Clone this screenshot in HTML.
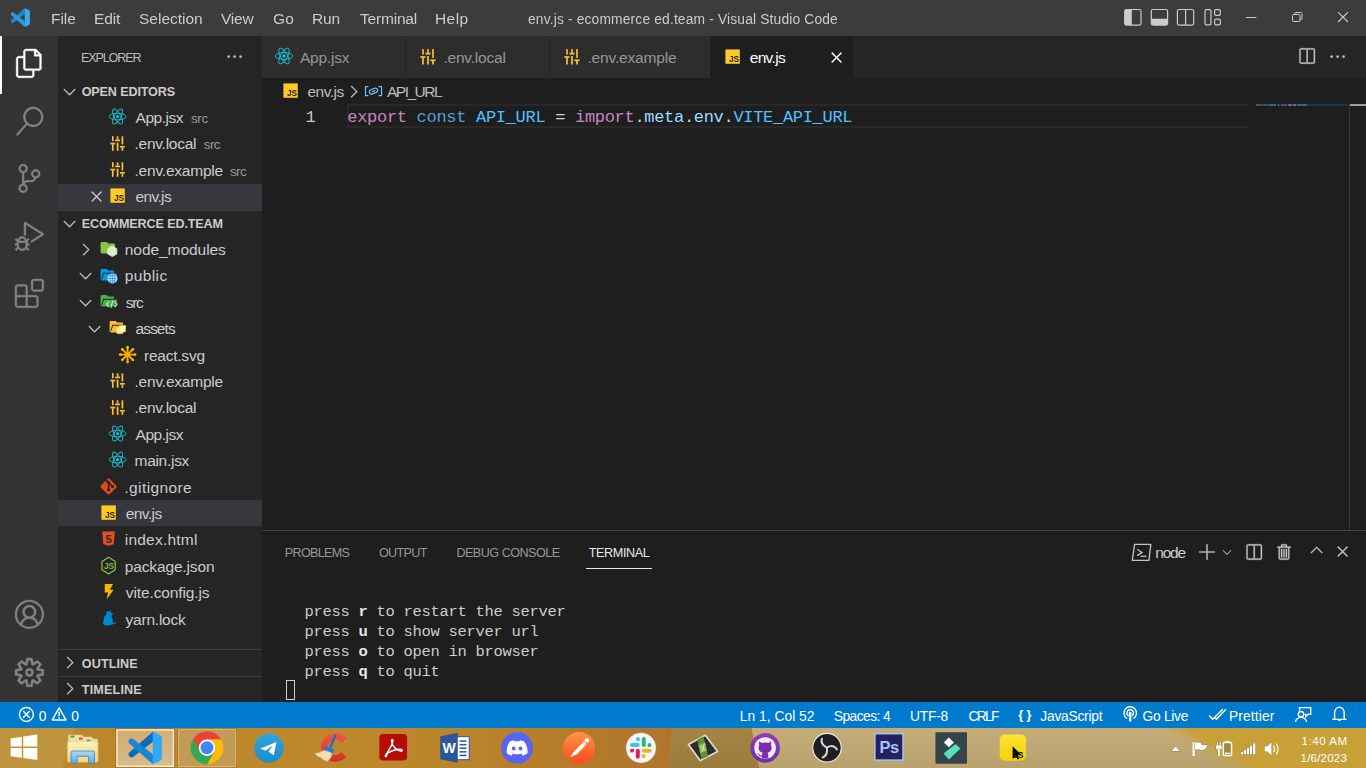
<!DOCTYPE html>
<html lang="en"><head><meta charset="utf-8"><title>env.js - ecommerce ed.team - Visual Studio Code</title>
<style>
html,body{margin:0;padding:0}
body{width:1366px;height:768px;overflow:hidden;position:relative;background:#1e1e1e;font-family:'Liberation Sans', sans-serif;}
.a{position:absolute}
.t{position:absolute;white-space:pre;line-height:20px;}
svg{position:absolute;overflow:visible}
.m{position:absolute;white-space:pre;font-family:'Liberation Mono', monospace;}

</style></head><body>
<div class="a" style="left:0px;top:0px;width:1366px;height:36px;background:#3c3c3c;"></div>
<div class="a" style="left:0px;top:36px;width:58px;height:666px;background:#333333;"></div>
<div class="a" style="left:0px;top:36px;width:2px;height:58px;background:#ffffff;"></div>
<div class="a" style="left:58px;top:36px;width:204px;height:666px;background:#252526;"></div>
<div class="a" style="left:58px;top:183.5px;width:204px;height:26.4px;background:#37373d;"></div>
<div class="a" style="left:58px;top:500px;width:204px;height:26.4px;background:#37373d;"></div>
<div class="a" style="left:58px;top:210px;width:204px;height:1px;background:#3c3c3d;"></div>
<div class="a" style="left:58px;top:649px;width:204px;height:1px;background:#3c3c3d;"></div>
<div class="a" style="left:58px;top:676px;width:204px;height:1px;background:#3c3c3d;"></div>
<div class="a" style="left:262px;top:36px;width:1104px;height:42px;background:#252526;"></div>
<div class="a" style="left:262px;top:36px;width:143px;height:42px;background:#2d2d2d;"></div>
<div class="a" style="left:406px;top:36px;width:143px;height:42px;background:#2d2d2d;"></div>
<div class="a" style="left:550px;top:36px;width:160px;height:42px;background:#2d2d2d;"></div>
<div class="a" style="left:711px;top:36px;width:142px;height:42px;background:#1e1e1e;"></div>
<div class="a" style="left:347px;top:104px;width:901px;height:24px;background:transparent;box-sizing:border-box;border:2px solid #282828;border-right:none;"></div>
<div class="a" style="left:1256px;top:104px;width:92px;height:2px;background:#21354a;"></div>
<div class="a" style="left:1349px;top:104px;width:1px;height:426px;background:#3a3a3a;"></div>
<div class="a" style="left:1256px;top:104px;width:6px;height:2px;background:#7d5a80;opacity:0.6"></div>
<div class="a" style="left:1263px;top:104px;width:5px;height:2px;background:#466a8c;opacity:0.6"></div>
<div class="a" style="left:1269px;top:104px;width:7px;height:2px;background:#3f86ad;opacity:0.6"></div>
<div class="a" style="left:1278px;top:104px;width:1px;height:2px;background:#888888;opacity:0.6"></div>
<div class="a" style="left:1281px;top:104px;width:6px;height:2px;background:#7d5a80;opacity:0.6"></div>
<div class="a" style="left:1288px;top:104px;width:4px;height:2px;background:#6f97b0;opacity:0.6"></div>
<div class="a" style="left:1293px;top:104px;width:3px;height:2px;background:#6f97b0;opacity:0.6"></div>
<div class="a" style="left:1297px;top:104px;width:10px;height:2px;background:#3f86ad;opacity:0.6"></div>
<div class="a" style="left:1350px;top:104px;width:16px;height:2px;background:#a0a0a0;"></div>
<div class="a" style="left:262px;top:530px;width:1104px;height:1px;background:#424242;"></div>
<div class="a" style="left:586px;top:568px;width:66px;height:1px;background:#e7e7e7;"></div>
<div class="a" style="left:286px;top:680px;width:9px;height:19.5px;background:transparent;box-sizing:border-box;border:1px solid #cccccc;"></div>
<div class="a" style="left:0px;top:701.6px;width:1366px;height:26.4px;background:#007acc;"></div>
<svg style="left:0px;top:728px" width="1366" height="40" viewBox="0 728 1366 40" ><defs><linearGradient id="tbL" x1="0" x2="1" y1="0" y2="0"><stop offset="0" stop-color="#bc862c"/><stop offset="0.55" stop-color="#bd882c"/><stop offset="0.72" stop-color="#b8832b"/><stop offset="0.9" stop-color="#b3792b"/><stop offset="1" stop-color="#b0752b"/></linearGradient><linearGradient id="tbT" x1="0" x2="0" y1="0" y2="1"><stop offset="0" stop-color="#c5ad7a"/><stop offset="1" stop-color="#baa26e"/></linearGradient><linearGradient id="tbO" x1="0" x2="0" y1="0" y2="1"><stop offset="0" stop-color="#a58442"/><stop offset="1" stop-color="#9b7c3c"/></linearGradient><linearGradient id="tbG" gradientUnits="userSpaceOnUse" x1="1204" y1="755" x2="1212" y2="741"><stop offset="0" stop-color="#c7a138" stop-opacity="0"/><stop offset="1" stop-color="#c7a138" stop-opacity="1"/></linearGradient></defs><rect x="0" y="728" width="1366" height="40" fill="url(#tbT)"/><rect x="0" y="728" width="672" height="40" fill="url(#tbL)"/><polygon points="0,728 74.500,728 62.500,768 0,768" fill="#bf943e"/><polygon points="671.700,728 751.500,728 759.300,768 668,768" fill="url(#tbO)"/><rect x="1120" y="728" width="246" height="40" fill="url(#tbG)"/><defs><linearGradient id="abtn" x1="0" x2="0.3" y1="0" y2="1"><stop offset="0" stop-color="#d1ab6f"/><stop offset="1" stop-color="#d7ba8f"/></linearGradient></defs><rect x="115.500" y="728.500" width="59.200" height="39" fill="#8f6418"/><rect x="116.900" y="729.900" width="56.500" height="36.400" fill="url(#abtn)" stroke="#fbedca" stroke-width="1.500"/><rect x="177.500" y="728.500" width="59.200" height="39" fill="#a9771f"/><rect x="178.600" y="729.600" width="57" height="37" fill="#c39b58" stroke="#dcb873" stroke-width="1"/></svg>
<svg style="left:14.6px;top:48.9px" width="28.8" height="28.8" viewBox="0 0 24 24" ><path d="M17.5 0h-9L7 1.5V6H2.5L1 7.5v15.07L2.5 24h12.07L16 22.57V18h4.7l1.3-1.43V4.5L17.5 0zm0 2.12l2.38 2.38H17.5V2.12zm-3 20.38h-12v-15H7v9.07L8.5 18h6v4.5zm6-6h-12v-15H16V6h4.5v10.5z" fill="#ffffff" stroke="#ffffff" stroke-width="0.35"/></svg>
<svg style="left:14.6px;top:106.5px" width="28.8" height="28.8" viewBox="0 0 24 24" ><path d="M15.25 0a8.25 8.25 0 0 0-6.18 13.72L1 22.88l1.12 1 8.05-9.12A8.251 8.251 0 1 0 15.25.01V0zm0 15a6.75 6.75 0 1 1 0-13.5 6.75 6.75 0 0 1 0 13.5z" fill="#858585" stroke="#858585" stroke-width="0.35"/></svg>
<svg style="left:14.6px;top:164.1px" width="28.8" height="28.8" viewBox="0 0 24 24" ><path d="M21.007 8.222A3.738 3.738 0 0 0 15.045 5.2a3.737 3.737 0 0 0 1.156 6.583 2.988 2.988 0 0 1-2.668 1.67h-2.99a4.456 4.456 0 0 0-2.989 1.165V7.4a3.737 3.737 0 1 0-1.494 0v9.117a3.776 3.776 0 1 0 1.816.099 2.99 2.99 0 0 1 2.668-1.667h2.99a4.484 4.484 0 0 0 4.223-3.039 3.736 3.736 0 0 0 3.25-3.687zM4.565 3.738a2.242 2.242 0 1 1 4.484 0 2.242 2.242 0 0 1-4.484 0zm4.484 16.441a2.242 2.242 0 1 1-4.484 0 2.242 2.242 0 0 1 4.484 0zm8.221-9.715a2.242 2.242 0 1 1 0-4.485 2.242 2.242 0 0 1 0 4.485z" fill="#858585" stroke="#858585" stroke-width="0.35"/></svg>
<svg style="left:14.6px;top:221.70000000000002px" width="28.8" height="28.8" viewBox="0 0 24 24" ><path d="M10.94 13.5l-1.32 1.32a3.73 3.73 0 0 0-7.24 0L1.06 13.5 0 14.56l1.72 1.72-.22.22V18H0v1.5h1.5v.08c.077.489.214.966.41 1.42L0 22.94 1.06 24l1.65-1.65A4.308 4.308 0 0 0 6 24a4.31 4.31 0 0 0 3.29-1.65L10.94 24 12 22.94 10.09 21c.198-.464.336-.951.41-1.45v-.1H12V18h-1.5v-1.5l-.22-.22L12 14.56l-1.06-1.06zM6 13.5a2.25 2.25 0 0 1 2.25 2.25h-4.5A2.25 2.25 0 0 1 6 13.5zm3 6a3.33 3.33 0 0 1-3 3 3.33 3.33 0 0 1-3-3v-2.25h6v2.25zm14.76-9.9v1.26L13.5 17.37V15.6l8.5-5.37L9 2v9.46a5.07 5.07 0 0 0-1.5-.72V.63L8.64 0l15.12 9.6z" fill="#858585" stroke="#858585" stroke-width="0.35"/></svg>
<svg style="left:14.6px;top:279.3px" width="28.8" height="28.8" viewBox="0 0 24 24" ><path d="M13.5 1.5L15 0h7.5L24 1.5V9l-1.5 1.5H15L13.5 9V1.5zm1.5 0V9h7.5V1.5H15zM0 15V6l1.5-1.5H9L10.5 6v7.5H18l1.5 1.5v7.5L18 24H1.5L0 22.5V15zm9-1.5V6H1.5v7.5H9zM9 15H1.5v7.5H9V15zm1.5 7.5H18V15h-7.5v7.5z" fill="#858585" stroke="#858585" stroke-width="0.35"/></svg>
<svg style="left:14.6px;top:599.8px" width="28.8" height="28.8" viewBox="0 0 16 16" ><path d="M16 7.992C16 3.58 12.416 0 8 0S0 3.58 0 7.992c0 2.43 1.104 4.62 2.832 6.09.016.016.032.016.032.032.144.112.288.224.448.336.08.048.144.111.224.175A7.98 7.98 0 0 0 8.016 16a7.98 7.98 0 0 0 4.48-1.375c.08-.048.144-.111.224-.16.144-.111.304-.223.448-.335.016-.016.032-.016.032-.032 1.696-1.487 2.8-3.676 2.8-6.106zm-8 7.001c-1.504 0-2.88-.48-4.016-1.279.016-.128.048-.255.08-.383a4.17 4.17 0 0 1 .416-.991c.176-.304.384-.576.64-.816.24-.24.528-.463.816-.639.304-.176.624-.304.976-.4A4.15 4.15 0 0 1 8 10.342a4.185 4.185 0 0 1 2.928 1.166c.368.368.656.8.864 1.295.112.288.192.592.24.911A7.03 7.03 0 0 1 8 14.993zm-2.448-7.4a2.49 2.49 0 0 1-.208-1.024c0-.351.064-.703.208-1.023.144-.32.336-.607.576-.847.24-.24.528-.431.848-.575.32-.144.672-.208 1.024-.208.368 0 .704.064 1.024.208.32.144.608.336.848.575.24.24.432.528.576.847.144.32.208.672.208 1.023 0 .368-.064.704-.208 1.023a2.84 2.84 0 0 1-.576.848 2.84 2.84 0 0 1-.848.575 2.715 2.715 0 0 1-2.064 0 2.84 2.84 0 0 1-.848-.575 2.526 2.526 0 0 1-.56-.848zm7.424 5.306c0-.032-.016-.048-.016-.08a5.22 5.22 0 0 0-.688-1.406 4.883 4.883 0 0 0-1.088-1.135 5.207 5.207 0 0 0-1.04-.608 2.82 2.82 0 0 0 .464-.383 4.2 4.2 0 0 0 .624-.784 3.624 3.624 0 0 0 .528-1.934 3.71 3.71 0 0 0-.288-1.47 3.799 3.799 0 0 0-.816-1.199 3.845 3.845 0 0 0-1.2-.8 3.72 3.72 0 0 0-1.472-.287 3.72 3.72 0 0 0-1.472.288 3.631 3.631 0 0 0-1.2.815 3.84 3.84 0 0 0-.8 1.199 3.71 3.71 0 0 0-.288 1.47c0 .352.048.688.144 1.007.096.336.224.64.4.927.16.288.384.544.624.784.144.144.304.271.48.383a5.12 5.12 0 0 0-1.04.624c-.416.32-.784.703-1.088 1.119a4.999 4.999 0 0 0-.688 1.406c-.016.032-.016.064-.016.08C1.776 11.636.992 9.91.992 7.992.992 4.14 4.144.991 8 .991s7.008 3.149 7.008 7.001a6.96 6.96 0 0 1-2.032 4.907z" fill="#858585" stroke="#858585" stroke-width="0.25"/></svg>
<svg style="left:14.6px;top:658px" width="28.8" height="28.8" viewBox="0 0 24 24" ><path d="M19.85 8.75l4.15.83v4.84l-4.15.83 2.35 3.52-3.43 3.43-3.52-2.35-.83 4.15H9.58l-.83-4.15-3.52 2.35-3.43-3.43 2.35-3.52L0 14.42V9.58l4.15-.83L1.8 5.23 5.23 1.8l3.52 2.35L9.58 0h4.84l.83 4.15 3.52-2.35 3.43 3.43-2.35 3.52zm-1.57 5.07l4-.81v-2l-4-.81-.54-1.3 2.29-3.43-1.43-1.43-3.43 2.29-1.3-.54-.81-4h-2l-.81 4-1.3.54-3.43-2.29-1.43 1.43L6.38 8.9l-.54 1.3-4 .81v2l4 .81.54 1.3-2.29 3.43 1.43 1.43 3.43-2.29 1.3.54.81 4h2l.81-4 1.3-.54 3.43 2.29 1.43-1.43-2.29-3.43.54-1.3zm-8.186-4.672A3.43 3.43 0 0 1 12 8.57 3.44 3.44 0 0 1 15.43 12a3.43 3.43 0 1 1-5.336-2.852zm.956 4.274c.281.188.612.288.95.288A1.7 1.7 0 0 0 13.71 12a1.71 1.71 0 1 0-2.66 1.422z" fill="#858585" stroke="#858585" stroke-width="0.35"/></svg>
<svg style="left:59.9px;top:81.6px" width="19.2" height="19.2" viewBox="0 0 16 16" ><path d="M7.976 10.072l4.357-4.357.62.618L8.284 11h-.618L3 6.333l.619-.618 4.357 4.357z" fill="#c5c5c5" stroke="#c5c5c5" stroke-width="0.25"/></svg>
<svg style="left:59.9px;top:213.6px" width="19.2" height="19.2" viewBox="0 0 16 16" ><path d="M7.976 10.072l4.357-4.357.62.618L8.284 11h-.618L3 6.333l.619-.618 4.357 4.357z" fill="#c5c5c5" stroke="#c5c5c5" stroke-width="0.25"/></svg>
<svg style="left:59.9px;top:653px" width="19.2" height="19.2" viewBox="0 0 16 16" ><path d="M10.072 8.024L5.715 3.667l.618-.62L11 7.716v.618L6.333 13l-.618-.619 4.357-4.357z" fill="#c5c5c5" stroke="#c5c5c5" stroke-width="0.25"/></svg>
<svg style="left:59.9px;top:679.2px" width="19.2" height="19.2" viewBox="0 0 16 16" ><path d="M10.072 8.024L5.715 3.667l.618-.62L11 7.716v.618L6.333 13l-.618-.619 4.357-4.357z" fill="#c5c5c5" stroke="#c5c5c5" stroke-width="0.25"/></svg>
<svg style="left:224.6px;top:46.8px" width="19.2" height="19.2" viewBox="0 0 16 16" ><path d="M4 8a1 1 0 1 1-2 0 1 1 0 0 1 2 0zm5 0a1 1 0 1 1-2 0 1 1 0 0 1 2 0zm5 0a1 1 0 1 1-2 0 1 1 0 0 1 2 0z" fill="#c5c5c5" stroke="#c5c5c5" stroke-width="0.25"/></svg>
<svg style="left:76.2px;top:240px" width="19.2" height="19.2" viewBox="0 0 16 16" ><path d="M10.072 8.024L5.715 3.667l.618-.62L11 7.716v.618L6.333 13l-.618-.619 4.357-4.357z" fill="#c5c5c5" stroke="#c5c5c5" stroke-width="0.25"/></svg>
<svg style="left:76.3px;top:266.4px" width="19.2" height="19.2" viewBox="0 0 16 16" ><path d="M7.976 10.072l4.357-4.357.62.618L8.284 11h-.618L3 6.333l.619-.618 4.357 4.357z" fill="#c5c5c5" stroke="#c5c5c5" stroke-width="0.25"/></svg>
<svg style="left:76.3px;top:292.8px" width="19.2" height="19.2" viewBox="0 0 16 16" ><path d="M7.976 10.072l4.357-4.357.62.618L8.284 11h-.618L3 6.333l.619-.618 4.357 4.357z" fill="#c5c5c5" stroke="#c5c5c5" stroke-width="0.25"/></svg>
<svg style="left:85.4px;top:319.2px" width="19.2" height="19.2" viewBox="0 0 16 16" ><path d="M7.976 10.072l4.357-4.357.62.618L8.284 11h-.618L3 6.333l.619-.618 4.357 4.357z" fill="#c5c5c5" stroke="#c5c5c5" stroke-width="0.25"/></svg>
<svg style="left:86.6px;top:187.1px" width="19.2" height="19.2" viewBox="0 0 16 16" ><path d="M8 8.707l3.646 3.647.708-.707L8.707 8l3.647-3.646-.707-.708L8 7.293 4.354 3.646l-.707.708L7.293 8l-3.646 3.646.707.708L8 8.707z" fill="#c5c5c5" stroke="#c5c5c5" stroke-width="0.25"/></svg>
<svg style="left:827.3px;top:47.5px" width="19.2" height="19.2" viewBox="0 0 16 16" ><path d="M8 8.707l3.646 3.647.708-.707L8.707 8l3.647-3.646-.707-.708L8 7.293 4.354 3.646l-.707.708L7.293 8l-3.646 3.646.707.708L8 8.707z" fill="#ffffff" stroke="#ffffff" stroke-width="0.25"/></svg>
<svg style="left:1297.3px;top:47px" width="19.2" height="19.2" viewBox="0 0 16 16" ><path d="M14 1H3L2 2v11l1 1h11l1-1V2l-1-1zM8 13H3V2h5v11zm6 0H9V2h5v11z" fill="#c5c5c5" stroke="#c5c5c5" stroke-width="0.25"/></svg>
<svg style="left:1328.3px;top:46.9px" width="19.2" height="19.2" viewBox="0 0 16 16" ><path d="M4 8a1 1 0 1 1-2 0 1 1 0 0 1 2 0zm5 0a1 1 0 1 1-2 0 1 1 0 0 1 2 0zm5 0a1 1 0 1 1-2 0 1 1 0 0 1 2 0z" fill="#c5c5c5" stroke="#c5c5c5" stroke-width="0.25"/></svg>
<svg style="left:1197.5px;top:542.6px" width="19.2" height="19.2" viewBox="0 0 16 16" ><path d="M14 7v1H8v6H7V8H1V7h6V1h1v6h6z" fill="#c5c5c5" stroke="#c5c5c5" stroke-width="0.25"/></svg>
<svg style="left:1219.5px;top:545.3px" width="14" height="14" viewBox="0 0 16 16" ><path d="M7.976 10.072l4.357-4.357.62.618L8.284 11h-.618L3 6.333l.619-.618 4.357 4.357z" fill="#c5c5c5" /></svg>
<svg style="left:1244.2px;top:542.6px" width="19.2" height="19.2" viewBox="0 0 16 16" ><path d="M14 1H3L2 2v11l1 1h11l1-1V2l-1-1zM8 13H3V2h5v11zm6 0H9V2h5v11z" fill="#c5c5c5" stroke="#c5c5c5" stroke-width="0.25"/></svg>
<svg style="left:1275.3px;top:542.6px" width="19.2" height="19.2" viewBox="0 0 16 16" ><path d="M10 3h3v1h-1v9l-1 1H4l-1-1V4H2V3h3V2a1 1 0 0 1 1-1h3a1 1 0 0 1 1 1v1zM9 2H6v1h3V2zM4 13h7V4H4v9zm2-8H5v7h1V5zm1 0h1v7H7V5zm2 0h1v7H9V5z" fill="#c5c5c5" stroke="#c5c5c5" stroke-width="0.25"/></svg>
<svg style="left:1306.8px;top:541.3px" width="19.2" height="19.2" viewBox="0 0 16 16" ><path d="M8.024 5.928l-4.357 4.357-.62-.618L7.716 5h.618L13 9.667l-.619.618-4.357-4.357z" fill="#c5c5c5" stroke="#c5c5c5" stroke-width="0.25"/></svg>
<svg style="left:1333.4px;top:542.4px" width="19.2" height="19.2" viewBox="0 0 16 16" ><path d="M8 8.707l3.646 3.647.708-.707L8.707 8l3.647-3.646-.707-.708L8 7.293 4.354 3.646l-.707.708L7.293 8l-3.646 3.646.707.708L8 8.707z" fill="#c5c5c5" stroke="#c5c5c5" stroke-width="0.25"/></svg>
<svg style="left:344px;top:82px" width="19.2" height="19.2" viewBox="0 0 16 16" ><path d="M10.072 8.024L5.715 3.667l.618-.62L11 7.716v.618L6.333 13l-.618-.619 4.357-4.357z" fill="#c5c5c5" stroke="#c5c5c5" stroke-width="0.25"/></svg>
<svg style="left:1126px;top:538px" width="70" height="28" viewBox="1126 538 70 28" ><path d="M1134.6 544.4 H1150.8 L1148.9 560.4 H1132.3 Z" fill="none" stroke="#c5c5c5" stroke-width="1.3" stroke-linejoin="round"/><path d="M1137.2 549.2 L1142 552.4 L1137.2 555.6" fill="none" stroke="#c5c5c5" stroke-width="1.3" /><path d="M1140.6 556.3 H1146.4" fill="none" stroke="#c5c5c5" stroke-width="1.3" /></svg>
<svg style="left:107.9px;top:106.8px" width="19.2" height="19.2" viewBox="0 0 24 24" ><ellipse cx="12" cy="12" rx="10.6" ry="4.1" fill="none" stroke="#1fbdd2" stroke-width="1.15" transform="rotate(0 12 12)"/><ellipse cx="12" cy="12" rx="10.6" ry="4.1" fill="none" stroke="#1fbdd2" stroke-width="1.15" transform="rotate(60 12 12)"/><ellipse cx="12" cy="12" rx="10.6" ry="4.1" fill="none" stroke="#1fbdd2" stroke-width="1.15" transform="rotate(120 12 12)"/><circle cx="12" cy="12" r="2" fill="#1fbdd2"/></svg>
<svg style="left:107.8px;top:133.6px" width="19.2" height="19.2" viewBox="0 0 24 24" ><rect x="5" y="3" width="2" height="6" fill="#fbc235" stroke="#fbc235" stroke-width="0.1"/><rect x="3" y="11" width="6" height="2" fill="#fbc235" stroke="#fbc235" stroke-width="0.1"/><rect x="5" y="13" width="2" height="8" fill="#fbc235" stroke="#fbc235" stroke-width="0.1"/><rect x="11" y="3" width="2" height="4" fill="#fbc235" stroke="#fbc235" stroke-width="0.1"/><rect x="9" y="7" width="6" height="2" fill="#fbc235" stroke="#fbc235" stroke-width="0.1"/><rect x="11" y="11" width="2" height="10" fill="#fbc235" stroke="#fbc235" stroke-width="0.1"/><rect x="17" y="3" width="2" height="10" fill="#fbc235" stroke="#fbc235" stroke-width="0.1"/><rect x="15" y="15" width="6" height="2" fill="#fbc235" stroke="#fbc235" stroke-width="0.1"/><rect x="17" y="17" width="2" height="4" fill="#fbc235" stroke="#fbc235" stroke-width="0.1"/></svg>
<svg style="left:107.8px;top:160px" width="19.2" height="19.2" viewBox="0 0 24 24" ><rect x="5" y="3" width="2" height="6" fill="#fbc235" stroke="#fbc235" stroke-width="0.1"/><rect x="3" y="11" width="6" height="2" fill="#fbc235" stroke="#fbc235" stroke-width="0.1"/><rect x="5" y="13" width="2" height="8" fill="#fbc235" stroke="#fbc235" stroke-width="0.1"/><rect x="11" y="3" width="2" height="4" fill="#fbc235" stroke="#fbc235" stroke-width="0.1"/><rect x="9" y="7" width="6" height="2" fill="#fbc235" stroke="#fbc235" stroke-width="0.1"/><rect x="11" y="11" width="2" height="10" fill="#fbc235" stroke="#fbc235" stroke-width="0.1"/><rect x="17" y="3" width="2" height="10" fill="#fbc235" stroke="#fbc235" stroke-width="0.1"/><rect x="15" y="15" width="6" height="2" fill="#fbc235" stroke="#fbc235" stroke-width="0.1"/><rect x="17" y="17" width="2" height="4" fill="#fbc235" stroke="#fbc235" stroke-width="0.1"/></svg>
<svg style="left:107.9px;top:186px" width="19.2" height="19.2" viewBox="0 0 24 24" ><rect x="3" y="3" width="18" height="18" fill="#ffca28"/><text x="19.6" y="19.2" text-anchor="end" font-family="Liberation Sans, sans-serif" font-weight="700" font-size="10.2" fill="#2a2204" letter-spacing="-0.2">JS</text></svg>
<svg style="left:274px;top:46.4px" width="20" height="20" viewBox="0 0 24 24" ><ellipse cx="12" cy="12" rx="10.6" ry="4.1" fill="none" stroke="#1fbdd2" stroke-width="1.15" transform="rotate(0 12 12)"/><ellipse cx="12" cy="12" rx="10.6" ry="4.1" fill="none" stroke="#1fbdd2" stroke-width="1.15" transform="rotate(60 12 12)"/><ellipse cx="12" cy="12" rx="10.6" ry="4.1" fill="none" stroke="#1fbdd2" stroke-width="1.15" transform="rotate(120 12 12)"/><circle cx="12" cy="12" r="2" fill="#1fbdd2"/></svg>
<svg style="left:418px;top:46.6px" width="20" height="20" viewBox="0 0 24 24" ><rect x="5" y="3" width="2" height="6" fill="#fbc235" stroke="#fbc235" stroke-width="0.1"/><rect x="3" y="11" width="6" height="2" fill="#fbc235" stroke="#fbc235" stroke-width="0.1"/><rect x="5" y="13" width="2" height="8" fill="#fbc235" stroke="#fbc235" stroke-width="0.1"/><rect x="11" y="3" width="2" height="4" fill="#fbc235" stroke="#fbc235" stroke-width="0.1"/><rect x="9" y="7" width="6" height="2" fill="#fbc235" stroke="#fbc235" stroke-width="0.1"/><rect x="11" y="11" width="2" height="10" fill="#fbc235" stroke="#fbc235" stroke-width="0.1"/><rect x="17" y="3" width="2" height="10" fill="#fbc235" stroke="#fbc235" stroke-width="0.1"/><rect x="15" y="15" width="6" height="2" fill="#fbc235" stroke="#fbc235" stroke-width="0.1"/><rect x="17" y="17" width="2" height="4" fill="#fbc235" stroke="#fbc235" stroke-width="0.1"/></svg>
<svg style="left:562px;top:46.6px" width="20" height="20" viewBox="0 0 24 24" ><rect x="5" y="3" width="2" height="6" fill="#fbc235" stroke="#fbc235" stroke-width="0.1"/><rect x="3" y="11" width="6" height="2" fill="#fbc235" stroke="#fbc235" stroke-width="0.1"/><rect x="5" y="13" width="2" height="8" fill="#fbc235" stroke="#fbc235" stroke-width="0.1"/><rect x="11" y="3" width="2" height="4" fill="#fbc235" stroke="#fbc235" stroke-width="0.1"/><rect x="9" y="7" width="6" height="2" fill="#fbc235" stroke="#fbc235" stroke-width="0.1"/><rect x="11" y="11" width="2" height="10" fill="#fbc235" stroke="#fbc235" stroke-width="0.1"/><rect x="17" y="3" width="2" height="10" fill="#fbc235" stroke="#fbc235" stroke-width="0.1"/><rect x="15" y="15" width="6" height="2" fill="#fbc235" stroke="#fbc235" stroke-width="0.1"/><rect x="17" y="17" width="2" height="4" fill="#fbc235" stroke="#fbc235" stroke-width="0.1"/></svg>
<svg style="left:723px;top:47.2px" width="19.2" height="19.2" viewBox="0 0 24 24" ><rect x="3" y="3" width="18" height="18" fill="#ffca28"/><text x="19.6" y="19.2" text-anchor="end" font-family="Liberation Sans, sans-serif" font-weight="700" font-size="10.2" fill="#2a2204" letter-spacing="-0.2">JS</text></svg>
<svg style="left:281px;top:80.9px" width="19.2" height="19.2" viewBox="0 0 24 24" ><rect x="3" y="3" width="18" height="18" fill="#ffca28"/><text x="19.6" y="19.2" text-anchor="end" font-family="Liberation Sans, sans-serif" font-weight="700" font-size="10.2" fill="#2a2204" letter-spacing="-0.2">JS</text></svg>
<svg style="left:107.8px;top:371.2px" width="19.2" height="19.2" viewBox="0 0 24 24" ><rect x="5" y="3" width="2" height="6" fill="#fbc235" stroke="#fbc235" stroke-width="0.1"/><rect x="3" y="11" width="6" height="2" fill="#fbc235" stroke="#fbc235" stroke-width="0.1"/><rect x="5" y="13" width="2" height="8" fill="#fbc235" stroke="#fbc235" stroke-width="0.1"/><rect x="11" y="3" width="2" height="4" fill="#fbc235" stroke="#fbc235" stroke-width="0.1"/><rect x="9" y="7" width="6" height="2" fill="#fbc235" stroke="#fbc235" stroke-width="0.1"/><rect x="11" y="11" width="2" height="10" fill="#fbc235" stroke="#fbc235" stroke-width="0.1"/><rect x="17" y="3" width="2" height="10" fill="#fbc235" stroke="#fbc235" stroke-width="0.1"/><rect x="15" y="15" width="6" height="2" fill="#fbc235" stroke="#fbc235" stroke-width="0.1"/><rect x="17" y="17" width="2" height="4" fill="#fbc235" stroke="#fbc235" stroke-width="0.1"/></svg>
<svg style="left:107.8px;top:397.6px" width="19.2" height="19.2" viewBox="0 0 24 24" ><rect x="5" y="3" width="2" height="6" fill="#fbc235" stroke="#fbc235" stroke-width="0.1"/><rect x="3" y="11" width="6" height="2" fill="#fbc235" stroke="#fbc235" stroke-width="0.1"/><rect x="5" y="13" width="2" height="8" fill="#fbc235" stroke="#fbc235" stroke-width="0.1"/><rect x="11" y="3" width="2" height="4" fill="#fbc235" stroke="#fbc235" stroke-width="0.1"/><rect x="9" y="7" width="6" height="2" fill="#fbc235" stroke="#fbc235" stroke-width="0.1"/><rect x="11" y="11" width="2" height="10" fill="#fbc235" stroke="#fbc235" stroke-width="0.1"/><rect x="17" y="3" width="2" height="10" fill="#fbc235" stroke="#fbc235" stroke-width="0.1"/><rect x="15" y="15" width="6" height="2" fill="#fbc235" stroke="#fbc235" stroke-width="0.1"/><rect x="17" y="17" width="2" height="4" fill="#fbc235" stroke="#fbc235" stroke-width="0.1"/></svg>
<svg style="left:107.9px;top:423.6px" width="19.2" height="19.2" viewBox="0 0 24 24" ><ellipse cx="12" cy="12" rx="10.6" ry="4.1" fill="none" stroke="#1fbdd2" stroke-width="1.15" transform="rotate(0 12 12)"/><ellipse cx="12" cy="12" rx="10.6" ry="4.1" fill="none" stroke="#1fbdd2" stroke-width="1.15" transform="rotate(60 12 12)"/><ellipse cx="12" cy="12" rx="10.6" ry="4.1" fill="none" stroke="#1fbdd2" stroke-width="1.15" transform="rotate(120 12 12)"/><circle cx="12" cy="12" r="2" fill="#1fbdd2"/></svg>
<svg style="left:107.9px;top:450px" width="19.2" height="19.2" viewBox="0 0 24 24" ><ellipse cx="12" cy="12" rx="10.6" ry="4.1" fill="none" stroke="#1fbdd2" stroke-width="1.15" transform="rotate(0 12 12)"/><ellipse cx="12" cy="12" rx="10.6" ry="4.1" fill="none" stroke="#1fbdd2" stroke-width="1.15" transform="rotate(60 12 12)"/><ellipse cx="12" cy="12" rx="10.6" ry="4.1" fill="none" stroke="#1fbdd2" stroke-width="1.15" transform="rotate(120 12 12)"/><circle cx="12" cy="12" r="2" fill="#1fbdd2"/></svg>
<svg style="left:117.6px;top:345px" width="19.2" height="19.2" viewBox="0 0 24 24" ><line x1="12" y1="12" x2="21.20" y2="12.00" stroke="#ffb300" stroke-width="2.3" stroke-linecap="round"/><line x1="12" y1="12" x2="18.51" y2="18.51" stroke="#ffb300" stroke-width="2.3" stroke-linecap="round"/><line x1="12" y1="12" x2="12.00" y2="21.20" stroke="#ffb300" stroke-width="2.3" stroke-linecap="round"/><line x1="12" y1="12" x2="5.49" y2="18.51" stroke="#ffb300" stroke-width="2.3" stroke-linecap="round"/><line x1="12" y1="12" x2="2.80" y2="12.00" stroke="#ffb300" stroke-width="2.3" stroke-linecap="round"/><line x1="12" y1="12" x2="5.49" y2="5.49" stroke="#ffb300" stroke-width="2.3" stroke-linecap="round"/><line x1="12" y1="12" x2="12.00" y2="2.80" stroke="#ffb300" stroke-width="2.3" stroke-linecap="round"/><line x1="12" y1="12" x2="18.51" y2="5.49" stroke="#ffb300" stroke-width="2.3" stroke-linecap="round"/><circle cx="21.30" cy="12.00" r="1.7" fill="#ffb300"/><circle cx="18.58" cy="18.58" r="1.7" fill="#ffb300"/><circle cx="12.00" cy="21.30" r="1.7" fill="#ffb300"/><circle cx="5.42" cy="18.58" r="1.7" fill="#ffb300"/><circle cx="2.70" cy="12.00" r="1.7" fill="#ffb300"/><circle cx="5.42" cy="5.42" r="1.7" fill="#ffb300"/><circle cx="12.00" cy="2.70" r="1.7" fill="#ffb300"/><circle cx="18.58" cy="5.42" r="1.7" fill="#ffb300"/><circle cx="12" cy="12" r="2.6" fill="#ffb300"/></svg>
<svg style="left:98.7px;top:239.2px" width="19.2" height="19.2" viewBox="0 0 24 24" ><path d="M9.6 3.6 H3.6 a1.6 1.6 0 0 0 -1.6 1.6 V16.4 a1.6 1.6 0 0 0 1.6 1.6 H18.4 a1.6 1.6 0 0 0 1.6-1.6 V7.2 a1.6 1.6 0 0 0 -1.6 -1.6 H11.6 Z" fill="#8bc34a" /><path d="M16.60 8.80 L22.32 12.10 L22.32 18.70 L16.60 22.00 L10.88 18.70 L10.88 12.10Z" fill="#dcedc8" stroke="#dcedc8" stroke-width="1" stroke-linejoin="round"/></svg>
<svg style="left:98.7px;top:265.6px" width="19.2" height="19.2" viewBox="0 0 24 24" ><path d="M3.6 3.6 H9.6 L11.6 5.6 H17.4 a1.6 1.6 0 0 1 1.6 1.6 V8.4 H5.4 L3.3 15 V18 H3.6 a1.6 1.6 0 0 1 -1.6 -1.6 V5.2 a1.6 1.6 0 0 1 1.6 -1.6z" fill="#039be5" /><path d="M6.2 9.6 H22.8 L20.3 17 a1.5 1.5 0 0 1 -1.4 1 H3.4 Z" fill="#039be5" /><circle cx="16.8" cy="15.6" r="6.3" fill="#cfeefd"/><path d="M10.5 15.6 H23.1 M16.8 9.3 V21.9 M11.6 12.4 H22 M11.6 18.8 H22" fill="none" stroke="#1e88e5" stroke-width="0.9" /><ellipse cx="16.8" cy="15.6" rx="2.9" ry="6.3" fill="none" stroke="#1e88e5" stroke-width="0.9"/></svg>
<svg style="left:98.7px;top:292px" width="19.2" height="19.2" viewBox="0 0 24 24" ><path d="M3.6 3.6 H9.6 L11.6 5.6 H17.4 a1.6 1.6 0 0 1 1.6 1.6 V8.4 H5.4 L3.3 15 V18 H3.6 a1.6 1.6 0 0 1 -1.6 -1.6 V5.2 a1.6 1.6 0 0 1 1.6 -1.6z" fill="#4caf50" /><path d="M6.2 9.6 H22.8 L20.3 17 a1.5 1.5 0 0 1 -1.4 1 H3.4 Z" fill="#4caf50" /><path d="M12.6 11.6 L9.6 15.2 L12.6 18.8 M19.6 11.6 L22.6 15.2 L19.6 18.8 M17.3 10.6 L14.9 19.8" fill="none" stroke="#c8e6c9" stroke-width="1.5" /></svg>
<svg style="left:108.3px;top:318.4px" width="19.2" height="19.2" viewBox="0 0 24 24" ><path d="M3.6 3.6 H9.6 L11.6 5.6 H17.4 a1.6 1.6 0 0 1 1.6 1.6 V8.4 H5.4 L3.3 15 V18 H3.6 a1.6 1.6 0 0 1 -1.6 -1.6 V5.2 a1.6 1.6 0 0 1 1.6 -1.6z" fill="#fbc02d" /><path d="M6.2 9.6 H22.8 L20.3 17 a1.5 1.5 0 0 1 -1.4 1 H3.4 Z" fill="#fbc02d" /><rect x="11" y="12" width="7.6" height="7.6" rx="0.8" fill="#fff3b0" stroke="#fbc02d" stroke-width="0.6"/><rect x="14" y="9.4" width="8" height="8" rx="0.8" fill="#fff9c4" stroke="#fbc02d" stroke-width="0.6"/></svg>
<svg style="left:98.7px;top:476.6px" width="19.2" height="19.2" viewBox="0 0 24 24" ><path d="M2.6 10.59L8.38 4.8l1.69 1.7c-.24.85.15 1.78.93 2.23v5.54c-.6.34-1 .99-1 1.73a2 2 0 0 0 2 2 2 2 0 0 0 2-2c0-.74-.4-1.39-1-1.73V9.41l2.07 2.09c-.07.15-.07.32-.07.5a2 2 0 0 0 2 2 2 2 0 0 0 2-2 2 2 0 0 0-2-2c-.18 0-.35 0-.5.07L13.93 7.5a1.98 1.98 0 0 0-1.15-2.34c-.43-.16-.88-.2-1.28-.09L9.8 3.38l.79-.78c.78-.79 2.04-.79 2.82 0l7.99 7.99c.79.78.79 2.04 0 2.82l-7.99 7.99c-.78.79-2.04.79-2.82 0L2.6 13.41c-.79-.78-.79-2.04 0-2.82z" fill="#e64a19" /></svg>
<svg style="left:98.9px;top:503px" width="19.2" height="19.2" viewBox="0 0 24 24" ><rect x="3" y="3" width="18" height="18" fill="#ffca28"/><text x="19.6" y="19.2" text-anchor="end" font-family="Liberation Sans, sans-serif" font-weight="700" font-size="10.2" fill="#2a2204" letter-spacing="-0.2">JS</text></svg>
<svg style="left:98.9px;top:529.4px" width="19.2" height="19.2" viewBox="0 0 24 24" ><path d="M4.07 3h15.86L18.5 19.2 12 21l-6.5-1.8L4.07 3z" fill="#e44d26" /><text x="12" y="17.6" text-anchor="middle" font-family="Liberation Sans, sans-serif" font-weight="700" font-size="14" fill="#2a2a2b">5</text></svg>
<svg style="left:98.9px;top:556px" width="19.2" height="19.2" viewBox="0 0 24 24" ><path d="M12.00 1.60 L20.31 6.80 L20.31 17.20 L12.00 22.40 L3.69 17.20 L3.69 6.80Z" fill="none" stroke="#8bc34a" stroke-width="1.5" stroke-linejoin="round"/><text x="12.2" y="16" text-anchor="middle" font-family="Liberation Sans, sans-serif" font-weight="700" font-size="11" fill="#7cb342" letter-spacing="-0.4">JS</text></svg>
<svg style="left:98.9px;top:582.2px" width="19.2" height="19.2" viewBox="0 0 24 24" ><path d="M7.2 2.4 H17.6 L13.6 9.6 H18.4 L9.4 22 L11.4 13.2 H7.2 Z" fill="#ffb300" /></svg>
<svg style="left:98.9px;top:608.6px" width="19.2" height="19.2" viewBox="0 0 24 24" ><path d="M13.2 2.2 c1 .4 1.7 1.5 2 2.9 c1.5-.3 2.3 .3 2 1.2 c-.3 .9-1.2 1.3-1.3 2.4 c-.2 2 1.6 3.600 1.6 6.500 c0 1.100-.2 2-.6 2.800 c1.300-.300 2.600-1.100 3.800-1.600 c.700-.300 1.500 .600 .600 1.200 c-1.700 1.100-3.500 1.900-5.600 2.200 c-2.400 .900-5.200 1.300-7.800 .900 c-.900-.100-1.300-.700-1-1.400 c-1.200-.200-2.100-.900-1.900-2.200 c.100-1 .600-1.900 1.200-2.600 c-.500-1.500-.300-3.200 .600-4.700 c.700-1.200 1.800-2.200 2.500-3.300 c-.500-1.300 0-2.900 .900-3.900 c.300-.300 .700-.300 .900 .100 c.300 .600 .700 1.100 1.200 1.400 c.100-.800 .300-1.400 .700-1.800 c.100-.100 .200-.100 .200-.100z" fill="#0288d1" /></svg>
<svg style="left:0px;top:728px" width="1366" height="40" viewBox="0 728 1366 40" ><g fill="#fffdf6"><polygon points="10.6,738.4 21.8,736.8 21.8,746.6 10.6,746.6"/><polygon points="23.2,736.6 37.3,734.5 37.3,746.6 23.2,746.6"/><polygon points="10.6,747.9 21.8,747.9 21.8,757.8 10.6,756.2"/><polygon points="23.2,747.9 37.3,747.9 37.3,760 23.2,758"/></g><defs><linearGradient id="fold" x1="0" x2="0" y1="0" y2="1"><stop offset="0" stop-color="#fdf2c0"/><stop offset="1" stop-color="#f2d479"/></linearGradient><linearGradient id="stand" x1="0" x2="0" y1="0" y2="1"><stop offset="0" stop-color="#a9dcf6"/><stop offset="1" stop-color="#5fa9dc"/></linearGradient></defs><path d="M68.4 735 H82 l1.500 2 H91.500 l1.500 2 H97.400 V745 H68.400Z" fill="#f6e2a0" stroke="#e3c778" stroke-width="0.6"/><rect x="70.400" y="735.600" width="4" height="2" fill="#2fb24a"/><rect x="79" y="737.600" width="3.600" height="2" fill="#d8402f"/><rect x="86.800" y="739.600" width="3.600" height="2" fill="#3b8ede"/><rect x="67.600" y="741.500" width="30.300" height="20.600" rx="1" fill="url(#fold)" stroke="#e9cd7c" stroke-width="0.7"/><path d="M71 752.500 a1.500 1.500 0 0 1 1.500-1.500 H93 a1.500 1.500 0 0 1 1.500 1.500 V763.300 H88.600 V756.300 H77.300 V763.300 H71Z" fill="url(#stand)" stroke="#3f8fcb" stroke-width="0.9"/><path d="M152.900 731.800 L129.500 752.300 A2.900 2.900 0 0 0 133.700 756.500 L152.900 741.700Z" fill="#0b6dba"/><path d="M152.900 764.200 L129.500 743.700 A2.900 2.900 0 0 1 133.700 739.500 L152.900 754.300Z" fill="#1786d5"/><path d="M152.800 731.600 L160.600 735.400 A2 2 0 0 1 161.800 737.200 V758.600 A2 2 0 0 1 160.600 760.400 L152.800 764.200Z" fill="#2baaf3"/><path d="M207.00 739.50 L221.03 739.60 A16.2 16.2 0 0 0 192.97 739.60 L199.90 751.80 A8.2 8.2 0 0 1 207.00 739.50Z" fill="#ea4335" stroke="#ea4335" stroke-width="0.3"/><path d="M214.10 751.80 L207.00 763.90 A16.2 16.2 0 0 0 221.03 739.60 L207.00 739.50 A8.2 8.2 0 0 1 214.10 751.80Z" fill="#fbbc05" stroke="#fbbc05" stroke-width="0.3"/><path d="M199.90 751.80 L192.97 739.60 A16.2 16.2 0 0 0 207.00 763.90 L214.10 751.80 A8.2 8.2 0 0 1 199.90 751.80Z" fill="#34a853" stroke="#34a853" stroke-width="0.3"/><circle cx="207" cy="747.7" r="8.2" fill="#ffffff"/><circle cx="207" cy="747.7" r="6.48" fill="#4285f4"/><defs><linearGradient id="tg" x1="0" x2="0" y1="0" y2="1"><stop offset="0" stop-color="#2fa6e0"/><stop offset="1" stop-color="#1c8bcb"/></linearGradient></defs><circle cx="269" cy="748.100" r="14.700" fill="url(#tg)"/><path d="M260 748.700 L276.400 742.100 L273.800 755.300 L268.400 751.400 L273.200 745.400 L265.800 750.500Z" fill="#ffffff"/><defs><linearGradient id="cc" x1="0" x2="0" y1="0" y2="1"><stop offset="0" stop-color="#ee5a45"/><stop offset="1" stop-color="#d42e26"/></linearGradient></defs><path d="M346.33 756.66 A14.4 14.4 0 1 1 346.65 738.53 L341.29 742.72 A7.6 7.6 0 1 0 341.12 752.29Z" fill="url(#cc)"/><line x1="335.200" y1="735.600" x2="330.300" y2="747.200" stroke="#1f6fc8" stroke-width="2.400" stroke-linecap="round"/><path d="M325 746.800 Q330 746 334.500 750 L332.400 753.600 Q328 750.800 323.600 750.600Z" fill="#2b78cf"/><path d="M323.400 750.400 Q328.500 750.600 332.500 753.700 Q331 758.500 327.500 761.400 L322.500 759.300 L320.700 757.200 L317.600 756.300 L314.700 753.300 Q320 753 323.400 750.400Z" fill="#f4deb0" stroke="#d9b980" stroke-width="0.5"/><rect x="379.300" y="734.100" width="27.800" height="26.400" rx="3.800" fill="#b60c04"/><path d="M385.600 755.400 C387.500 751.500 392 746.500 392.800 741.500 C393.200 738.800 391.400 738.800 391.600 741.500 C392 746 397 751 401.500 751.200 C403.300 750.200 401.500 749 399 749.300 C394 749.800 388.500 752 385.600 755.400 C384.600 756.800 386.200 757.200 386.800 755.600" fill="none" stroke="#ffffff" stroke-width="1.500" stroke-linejoin="round" stroke-linecap="round"/><rect x="456" y="736.700" width="13.200" height="23" fill="#ffffff" stroke="#2b579a" stroke-width="1"/><rect x="459.500" y="740.3" width="7" height="1.500" fill="#2b579a"/><rect x="459.500" y="743.9" width="7" height="1.500" fill="#2b579a"/><rect x="459.500" y="747.5" width="7" height="1.500" fill="#2b579a"/><rect x="459.500" y="751.1" width="7" height="1.500" fill="#2b579a"/><rect x="459.500" y="754.7" width="7" height="1.500" fill="#2b579a"/><polygon points="440.200,736.500 457.800,732.700 457.800,762.700 440.200,759.300" fill="#2b579a"/><text x="449.200" y="753.300" text-anchor="middle" font-family="Liberation Sans, sans-serif" font-weight="700" font-size="14" fill="#ffffff">W</text><circle cx="517.100" cy="747.900" r="15.900" fill="#5865f2"/><path d="M509.800 741.600 C511.500 740.800 513 740.400 514.300 740.300 L514.900 741.500 C516.400 741.300 517.800 741.300 519.300 741.500 L519.900 740.300 C521.300 740.400 522.800 740.800 524.400 741.600 C526.800 745.200 527.900 749.200 527.500 753.200 C525.800 754.500 524.100 755.200 522.500 755.600 L521.400 753.900 C522 753.700 522.600 753.400 523.100 753 C519.300 754.700 514.900 754.700 511.100 753 C511.600 753.400 512.200 753.700 512.800 753.900 L511.700 755.600 C510.100 755.200 508.400 754.500 506.700 753.200 C506.300 749.200 507.400 745.200 509.800 741.600Z" fill="#ffffff"/><ellipse cx="513.700" cy="748.500" rx="1.900" ry="2.100" fill="#5865f2"/><ellipse cx="520.500" cy="748.500" rx="1.900" ry="2.100" fill="#5865f2"/><defs><linearGradient id="pm" x1="0" x2="0" y1="0" y2="1"><stop offset="0" stop-color="#ff9448"/><stop offset="1" stop-color="#fb4a20"/></linearGradient></defs><circle cx="579" cy="747.900" r="16" fill="url(#pm)"/><path d="M570.200 756.900 L573.500 752.200 L582.500 743 L585.300 745.400 L576.800 754.200 L572.500 756.300Z" fill="#ffffff"/><circle cx="586.900" cy="740.500" r="2.300" fill="#ffffff"/><path d="M583.300 742.400 L585.800 744.700" stroke="#ffffff" stroke-width="1.600"/><circle cx="641" cy="747.900" r="15.300" fill="#f7f6f4" stroke="#6b4a1c" stroke-opacity="0.55" stroke-width="0.700"/><rect x="630.1" y="743" width="9.60" height="4.00" rx="2.00" fill="#36c5f0"/><path d="M639.800 740.900 V739 a1.900 1.900 0 1 0 -1.900 1.900Z" fill="#36c5f0"/><rect x="641.8" y="737.1" width="4.00" height="9.80" rx="2.00" fill="#2eb67d"/><path d="M647.600 746.900 H649.600 a1.950 1.950 0 1 0 -1.950 -1.950Z" fill="#2eb67d"/><rect x="641.8" y="748.8" width="9.90" height="4.00" rx="2.00" fill="#ecb22e"/><path d="M641.800 754.300 V756.300 a1.950 1.950 0 1 0 1.950 -1.950Z" fill="#ecb22e"/><rect x="635.8" y="748.8" width="4.00" height="9.90" rx="2.00" fill="#e01e5a"/><path d="M634 748.700 H632 a1.950 1.950 0 1 0 1.950 1.950Z" fill="#e01e5a"/><polygon points="705.300,735.200 717.600,751.600 700.200,760.600 688.400,744.600" fill="#2b2e2a" stroke="#dcdcd2" stroke-width="1.700" stroke-linejoin="round"/><polygon points="697.200,739.500 703.500,736.600 708.200,756.200 701.400,759.300" fill="#5f8f36"/><polygon points="698.600,745.200 705,742.200 706.800,750.400 700.400,753.400" fill="#8cbc52"/><path d="M700.300 746 L705.400 750.400 M704.400 743.800 L701.800 751.800" stroke="#e2f2c8" stroke-width="0.900"/><defs><linearGradient id="ghd" x1="0" x2="0" y1="0" y2="1"><stop offset="0" stop-color="#9b36ba"/><stop offset="1" stop-color="#6c2fa6"/></linearGradient></defs><circle cx="765.100" cy="747.900" r="14.800" fill="url(#ghd)"/><circle cx="765.100" cy="748" r="10.800" fill="#f4ecf8"/><path d="M759.500 741.200 L761.600 743 Q765.100 742 768.600 743 L770.700 741.200 Q771.600 743.400 770.900 745 Q772.600 748.600 770.300 751.200 Q769.200 752.400 767.600 752.800 Q768.400 754 768.300 755.500 V758.600 H762 V756.600 Q759.500 757.200 758.500 755 Q757.800 753.800 756.900 753.500 Q758.500 753 759.500 754.800 Q760.500 755.800 762 755.200 Q762.100 753.600 762.700 752.800 Q761 752.400 759.900 751.200 Q757.600 748.600 759.300 745 Q758.600 743.400 759.500 741.200Z" fill="#7d2bb0"/><circle cx="827" cy="747.700" r="14.300" fill="#201e22" stroke="#efe7d8" stroke-width="1.200"/><g fill="none" stroke="#d4d4d4" stroke-width="2" stroke-linecap="round"><path d="M821.900 738.800 Q820.300 744.500 826.600 747.500"/><path d="M837 749.400 Q833.300 743.900 827 747.500"/><path d="M822.700 757.500 Q827.700 755.500 827 748"/></g><rect x="874.900" y="733.700" width="28.100" height="26.400" fill="#26205f" stroke="#9fc6f6" stroke-width="1.500"/><text x="889" y="753.200" text-anchor="middle" font-family="Liberation Sans, sans-serif" font-weight="700" font-size="16.500" fill="#9fc6f6" letter-spacing="-0.500">Ps</text><rect x="935.400" y="732.300" width="31.600" height="31.500" rx="1" fill="#37434a"/><polygon points="948.900,737.600 953.900,742.400 948.900,747.200 943.900,742.400" fill="#ffffff"/><polygon points="955.500,744.100 960.500,748.500 948.900,759.500 943.600,753.600" fill="#55e0c4"/><defs><linearGradient id="yj" x1="0" x2="0" y1="0" y2="1"><stop offset="0" stop-color="#fbe531"/><stop offset="1" stop-color="#f3d10c"/></linearGradient></defs><rect x="999.700" y="734.600" width="26.400" height="26.200" rx="5" fill="url(#yj)"/><text x="1023.400" y="757.600" text-anchor="end" font-family="Liberation Sans, sans-serif" font-weight="700" font-size="8.500" fill="#1a1a10">JS</text><polygon points="1012.600,746.200 1012.600,759 1015.700,756.200 1017.800,759.600 1019.300,758.800 1017.300,755.400 1021.500,755" fill="#0c0c08"/><polygon points="1171.500,751.100 1175.600,746.600 1179.800,751.100" fill="#ffffff" stroke="#5e4a12" stroke-opacity="0.75" stroke-width="0.6" paint-order="stroke"/><rect x="1192.400" y="741.700" width="2.400" height="14.700" fill="#ffffff" stroke="#5e4a12" stroke-opacity="0.75" stroke-width="0.6" paint-order="stroke"/><path d="M1194.800 742.600 H1199.500 Q1201.300 742.800 1201.300 744.600 Q1204.500 745.600 1207.600 744.800 Q1207 749.500 1201.600 750.600 Q1200.500 749.500 1199 749.500 H1194.800Z" fill="#ffffff" stroke="#5e4a12" stroke-opacity="0.75" stroke-width="0.6" paint-order="stroke"/><rect x="1223.300" y="742.600" width="8.300" height="12.800" rx="1" fill="#a8873c" stroke="#ffffff" stroke-width="1.500"/><rect x="1225.500" y="741" width="4" height="1.300" fill="#ffffff"/><rect x="1224.800" y="752.600" width="5.300" height="1.500" fill="#ffffff"/><g stroke="#5e4a12" stroke-opacity="0.75" stroke-width="0.6" paint-order="stroke"><rect x="1216.800" y="742.100" width="1.300" height="3.500" fill="#ffffff"/><rect x="1219.600" y="742.100" width="1.300" height="3.500" fill="#ffffff"/><rect x="1216" y="745.200" width="5.700" height="4.200" rx="0.800" fill="#ffffff"/><rect x="1218" y="749" width="1.800" height="7.400" fill="#ffffff"/></g><rect x="1240.6" y="752.2" width="2.400" height="2.2" fill="#ffffff" stroke="#5e4a12" stroke-opacity="0.75" stroke-width="0.6" paint-order="stroke"/><rect x="1243.7" y="750.0" width="2.400" height="4.4" fill="#ffffff" stroke="#5e4a12" stroke-opacity="0.75" stroke-width="0.6" paint-order="stroke"/><rect x="1246.8" y="747.8" width="2.400" height="6.6" fill="#ffffff" stroke="#5e4a12" stroke-opacity="0.75" stroke-width="0.6" paint-order="stroke"/><rect x="1249.9" y="745.6" width="2.400" height="8.8" fill="#ffffff" stroke="#5e4a12" stroke-opacity="0.75" stroke-width="0.6" paint-order="stroke"/><rect x="1253.0" y="743.4" width="2.400" height="11.0" fill="#ffffff" stroke="#5e4a12" stroke-opacity="0.75" stroke-width="0.6" paint-order="stroke"/><path d="M1264.600 746.300 H1267.300 L1271.500 742.300 V755.500 L1267.300 751.500 H1264.600Z" fill="#ffffff" stroke="#5e4a12" stroke-opacity="0.75" stroke-width="0.6" paint-order="stroke"/><path d="M1273.600 745.700 Q1275.600 749 1273.600 752.300 M1276.300 743.600 Q1279.600 749 1276.300 754.400" fill="none" stroke="#ffffff" stroke-width="1.200"/></svg>
<svg style="left:0px;top:700px" width="1366" height="30" viewBox="0 700 1366 30" ><circle cx="26.400" cy="714.400" r="7" fill="none" stroke="#ffffff" stroke-width="1.450"/><path d="M23.100 711.100 L29.700 717.700 M29.700 711.100 L23.100 717.700" stroke="#ffffff" stroke-width="1.450" fill="none"/><path d="M59.100 707.900 L52.300 719.900 H65.900Z" fill="none" stroke="#ffffff" stroke-width="1.450" stroke-linejoin="round"/><path d="M59.100 711.800 V716.300 M59.100 717.300 V718.600" stroke="#ffffff" stroke-width="1.450" fill="none"/><g fill="none" stroke="#ffffff" stroke-width="1.350" stroke-linecap="round"><path d="M1126.600 718.200 A6.300 6.300 0 1 1 1133.800 718.200"/><path d="M1128.300 715.700 A3.300 3.300 0 1 1 1132.100 715.700"/></g><circle cx="1130.200" cy="713.300" r="1.500" fill="#ffffff"/><path d="M1129.200 714 H1131.200 L1131.500 721.500 H1128.900Z" fill="#ffffff"/><path d="M1209.100 715.600 L1212.700 719.300 L1222.800 709.300 M1214.800 717.600 L1216.400 719.300 L1225.900 709.300" fill="none" stroke="#ffffff" stroke-width="1.400"/><g fill="none" stroke="#ffffff" stroke-width="1.350"><circle cx="1301" cy="714.200" r="2.700"/><path d="M1295.500 721.900 A5.500 4.600 0 0 1 1306.500 721.900"/><path d="M1299.500 710.500 V707.600 H1310.700 V714.200 H1308.200 L1305.700 716.700 V714.200 H1304.800" stroke-linejoin="miter"/></g><path d="M1333 719.400 H1345.800 M1334.600 719.400 V712.600 A4.800 5.300 0 0 1 1344.200 712.600 V719.400" fill="none" stroke="#ffffff" stroke-width="1.400" stroke-linecap="square"/><path d="M1337.800 720 A1.700 1.700 0 0 0 1341 720Z" fill="#ffffff"/></svg>
<svg style="left:0px;top:0px" width="1366" height="36" viewBox="0 0 1366 36" ><g transform="translate(10.800 8) scale(0.575) translate(-128.600 -731.300)"><path d="M152.900 731.800 L129.500 752.300 A2.900 2.900 0 0 0 133.700 756.500 L152.900 741.700Z" fill="#1f85d0"/><path d="M152.900 764.200 L129.500 743.700 A2.900 2.900 0 0 1 133.700 739.500 L152.900 754.300Z" fill="#2b9ae6"/><path d="M152.800 731.600 L160.600 735.400 A2 2 0 0 1 161.800 737.200 V758.600 A2 2 0 0 1 160.600 760.400 L152.800 764.200Z" fill="#3aabf3"/></g><rect x="1124.700" y="9.500" width="16.300" height="15.600" rx="1.800" fill="none" stroke="#cccccc" stroke-width="1.200"/><path d="M1124.700 11 a1.500 1.500 0 0 1 1.500 -1.500 H1131.800 V25.100 H1126.200 a1.500 1.500 0 0 1 -1.500 -1.500Z" fill="#cccccc"/><rect x="1151.300" y="9.500" width="16.300" height="15.600" rx="1.800" fill="none" stroke="#cccccc" stroke-width="1.200"/><path d="M1151.300 18.800 H1167.600 V23.600 a1.500 1.500 0 0 1 -1.500 1.500 H1152.800 a1.500 1.500 0 0 1 -1.500 -1.500Z" fill="#cccccc"/><rect x="1177.400" y="9.500" width="16.300" height="15.600" rx="1.800" fill="none" stroke="#cccccc" stroke-width="1.200"/><path d="M1185.600 9.500 V25.100" stroke="#cccccc" stroke-width="1.200"/><rect x="1205" y="9.700" width="6" height="15.200" rx="1.500" fill="none" stroke="#cccccc" stroke-width="1.200"/><rect x="1214.600" y="9.700" width="5.700" height="5.700" rx="1.400" fill="none" stroke="#cccccc" stroke-width="1.200"/><rect x="1214.600" y="19.200" width="5.700" height="5.700" rx="1.400" fill="none" stroke="#cccccc" stroke-width="1.200"/><path d="M1246 17.500 H1256.400" stroke="#cccccc" stroke-width="1"/><rect x="1292.500" y="14.500" width="7.500" height="7" rx="1.200" fill="none" stroke="#cccccc" stroke-width="1"/><path d="M1294.500 14.500 V13.800 a1.300 1.300 0 0 1 1.300 -1.300 H1300.700 a1.300 1.300 0 0 1 1.300 1.300 V18.500 a1.300 1.300 0 0 1 -1.300 1.300 H1300" fill="none" stroke="#cccccc" stroke-width="1"/><path d="M1338 12.100 L1348 22 M1348 12.100 L1338 22" stroke="#cccccc" stroke-width="1.100" fill="none"/></svg>
<svg style="left:360px;top:80px" width="30" height="22" viewBox="360 80 30 22" ><path d="M368.400 86.600 H365.500 V95.600 H368.400 M378.600 86.600 H381.500 V95.600 H378.600" fill="none" stroke="#75beff" stroke-width="1.200"/><rect x="369.300" y="88.900" width="8.400" height="4.400" rx="2.200" fill="none" stroke="#75beff" stroke-width="1.200" transform="rotate(-22 373.500 91.100)"/><path d="M371.800 92 L375.200 90.200" stroke="#75beff" stroke-width="1.100"/></svg>
<div class="m" style="left:347.3px;top:106px;line-height:24px;font-size:17px;letter-spacing:-0.304px"><span style="color:#c586c0">export</span> <span style="color:#569cd6">const</span> <span style="color:#4fc1ff">API_URL</span><span style="color:#d4d4d4"> = </span><span style="color:#c586c0">import</span><span style="color:#d4d4d4">.</span><span style="color:#9cdcfe">meta</span><span style="color:#d4d4d4">.</span><span style="color:#9cdcfe">env</span><span style="color:#d4d4d4">.</span><span style="color:#4fc1ff">VITE_API_URL</span></div><div class="m" style="left:305.6px;top:106px;line-height:24px;font-size:17px;color:#c6c6c6">1</div><div class="m" style="left:286.4px;top:602px;line-height:20px;font-size:15.5px;letter-spacing:-0.3px;color:#cccccc">  press <b style="color:#e5e5e5">r</b> to restart the server
  press <b style="color:#e5e5e5">u</b> to show server url
  press <b style="color:#e5e5e5">o</b> to open in browser
  press <b style="color:#e5e5e5">q</b> to quit</div>
<span class="t" style="left:50.60px;top:9.00px;font-size:15.5px;color:#cccccc;letter-spacing:-0.052px;will-change:transform;">File</span><span class="t" style="left:93.50px;top:9.00px;font-size:15.5px;color:#cccccc;letter-spacing:-0.134px;will-change:transform;">Edit</span><span class="t" style="left:139.40px;top:9.00px;font-size:15.5px;color:#cccccc;letter-spacing:-0.005px;will-change:transform;">Selection</span><span class="t" style="left:221.40px;top:9.00px;font-size:15.5px;color:#cccccc;letter-spacing:-0.241px;will-change:transform;">View</span><span class="t" style="left:273.40px;top:9.00px;font-size:15.5px;color:#cccccc;letter-spacing:0.244px;will-change:transform;">Go</span><span class="t" style="left:312.20px;top:9.00px;font-size:15.5px;color:#cccccc;letter-spacing:-0.107px;will-change:transform;">Run</span><span class="t" style="left:359.50px;top:9.00px;font-size:15.5px;color:#cccccc;letter-spacing:-0.190px;will-change:transform;">Terminal</span><span class="t" style="left:435.40px;top:9.00px;font-size:15.5px;color:#cccccc;letter-spacing:0.414px;will-change:transform;">Help</span><span class="t" style="left:527.90px;top:10.00px;font-size:13.8px;color:#cccccc;letter-spacing:0.160px;will-change:transform;">env.js - ecommerce ed.team - Visual Studio Code</span><span class="t" style="left:81.00px;top:48.00px;font-size:12.6px;color:#bbbbbb;letter-spacing:-1.156px;">EXPLORER</span><span class="t" style="left:81.70px;top:82.00px;font-size:12.6px;color:#cccccc;letter-spacing:-0.140px;font-weight:700;">OPEN EDITORS</span><span class="t" style="left:135.50px;top:108.00px;font-size:15.5px;color:#cccccc;letter-spacing:-0.463px;">App.jsx</span><span class="t" style="left:191.00px;top:109.00px;font-size:13.5px;color:#9a9a9a;letter-spacing:-0.423px;">src</span><span class="t" style="left:134.50px;top:134.00px;font-size:15.5px;color:#cccccc;letter-spacing:-0.265px;">.env.local</span><span class="t" style="left:203.80px;top:135.00px;font-size:13.5px;color:#9a9a9a;letter-spacing:-0.623px;">src</span><span class="t" style="left:134.50px;top:161.00px;font-size:15.5px;color:#cccccc;letter-spacing:-0.211px;">.env.example</span><span class="t" style="left:229.90px;top:162.00px;font-size:13.5px;color:#9a9a9a;letter-spacing:-0.573px;">src</span><span class="t" style="left:135.50px;top:187.00px;font-size:15.5px;color:#cccccc;letter-spacing:-0.638px;">env.js</span><span class="t" style="left:81.70px;top:214.00px;font-size:12.6px;color:#cccccc;letter-spacing:-0.128px;font-weight:700;">ECOMMERCE ED.TEAM</span><span class="t" style="left:124.80px;top:240.00px;font-size:15.5px;color:#cccccc;letter-spacing:-0.058px;">node_modules</span><span class="t" style="left:124.80px;top:266.00px;font-size:15.5px;color:#cccccc;letter-spacing:0.370px;">public</span><span class="t" style="left:125.80px;top:293.00px;font-size:15.5px;color:#cccccc;letter-spacing:-1.356px;">src</span><span class="t" style="left:135.50px;top:319.00px;font-size:15.5px;color:#cccccc;letter-spacing:-0.929px;">assets</span><span class="t" style="left:144.00px;top:346.00px;font-size:15.5px;color:#cccccc;letter-spacing:-0.233px;">react.svg</span><span class="t" style="left:134.50px;top:372.00px;font-size:15.5px;color:#cccccc;letter-spacing:-0.211px;">.env.example</span><span class="t" style="left:134.50px;top:398.00px;font-size:15.5px;color:#cccccc;letter-spacing:-0.265px;">.env.local</span><span class="t" style="left:135.50px;top:425.00px;font-size:15.5px;color:#cccccc;letter-spacing:-0.463px;">App.jsx</span><span class="t" style="left:134.50px;top:451.00px;font-size:15.5px;color:#cccccc;letter-spacing:-0.285px;">main.jsx</span><span class="t" style="left:124.40px;top:478.00px;font-size:15.5px;color:#cccccc;letter-spacing:0.395px;">.gitignore</span><span class="t" style="left:125.80px;top:504.00px;font-size:15.5px;color:#cccccc;letter-spacing:-0.598px;">env.js</span><span class="t" style="left:124.80px;top:530.00px;font-size:15.5px;color:#cccccc;letter-spacing:0.211px;">index.html</span><span class="t" style="left:124.80px;top:557.00px;font-size:15.5px;color:#cccccc;letter-spacing:-0.147px;">package.json</span><span class="t" style="left:125.80px;top:583.00px;font-size:15.5px;color:#cccccc;letter-spacing:-0.118px;">vite.config.js</span><span class="t" style="left:125.60px;top:610.00px;font-size:15.5px;color:#cccccc;letter-spacing:-0.234px;">yarn.lock</span><span class="t" style="left:81.80px;top:654.00px;font-size:12.6px;color:#cccccc;letter-spacing:0.105px;font-weight:700;">OUTLINE</span><span class="t" style="left:81.80px;top:680.00px;font-size:12.6px;color:#cccccc;letter-spacing:0.162px;font-weight:700;">TIMELINE</span><span class="t" style="left:299.90px;top:48.00px;font-size:15.5px;color:#969696;letter-spacing:-0.213px;">App.jsx</span><span class="t" style="left:443.40px;top:48.00px;font-size:15.5px;color:#969696;letter-spacing:-0.199px;">.env.local</span><span class="t" style="left:587.50px;top:48.00px;font-size:15.5px;color:#969696;letter-spacing:-0.184px;">.env.example</span><span class="t" style="left:749.70px;top:48.00px;font-size:15.5px;color:#ffffff;letter-spacing:-0.658px;">env.js</span><span class="t" style="left:307.50px;top:82.00px;font-size:15.5px;color:#bdbdbd;letter-spacing:-0.538px;">env.js</span><span class="t" style="left:387.00px;top:82.00px;font-size:15.5px;color:#bdbdbd;letter-spacing:-1.498px;">API_URL</span><span class="t" style="left:284.80px;top:543.00px;font-size:12.6px;color:#979797;letter-spacing:-0.684px;">PROBLEMS</span><span class="t" style="left:378.90px;top:543.00px;font-size:12.6px;color:#979797;letter-spacing:-0.636px;">OUTPUT</span><span class="t" style="left:456.40px;top:543.00px;font-size:12.6px;color:#979797;letter-spacing:-0.506px;">DEBUG CONSOLE</span><span class="t" style="left:588.80px;top:543.00px;font-size:12.6px;color:#e7e7e7;letter-spacing:-0.396px;">TERMINAL</span><span class="t" style="left:1155.30px;top:543.00px;font-size:15.5px;color:#cccccc;letter-spacing:-1.220px;">node</span><span class="t" style="left:38.80px;top:707.00px;font-size:13.8px;color:#ffffff;letter-spacing:0.000px;">0</span><span class="t" style="left:71.20px;top:707.00px;font-size:13.8px;color:#ffffff;letter-spacing:0.000px;">0</span><span class="t" style="left:739.80px;top:707.00px;font-size:13.8px;color:#ffffff;letter-spacing:0.025px;">Ln 1, Col 52</span><span class="t" style="left:833.80px;top:707.00px;font-size:13.8px;color:#ffffff;letter-spacing:-0.548px;">Spaces: 4</span><span class="t" style="left:910.10px;top:707.00px;font-size:13.8px;color:#ffffff;letter-spacing:-0.253px;">UTF-8</span><span class="t" style="left:968.40px;top:707.00px;font-size:13.8px;color:#ffffff;letter-spacing:-1.700px;">CRLF</span><span class="t" style="left:1018.30px;top:705.00px;font-size:12.6px;color:#ffffff;letter-spacing:3.399px;font-weight:700;">{}</span><span class="t" style="left:1040.30px;top:707.00px;font-size:13.8px;color:#ffffff;letter-spacing:-0.242px;">JavaScript</span><span class="t" style="left:1142.50px;top:707.00px;font-size:13.8px;color:#ffffff;letter-spacing:-0.279px;">Go Live</span><span class="t" style="left:1229.00px;top:707.00px;font-size:13.8px;color:#ffffff;letter-spacing:0.132px;">Prettier</span><span class="t" style="left:1301.60px;top:731.00px;font-size:11.6px;color:#ffffff;letter-spacing:0.497px;">1:40 AM</span><span class="t" style="left:1300.60px;top:748.00px;font-size:11.6px;color:#ffffff;letter-spacing:0.160px;">1/6/2023</span>
</body></html>
